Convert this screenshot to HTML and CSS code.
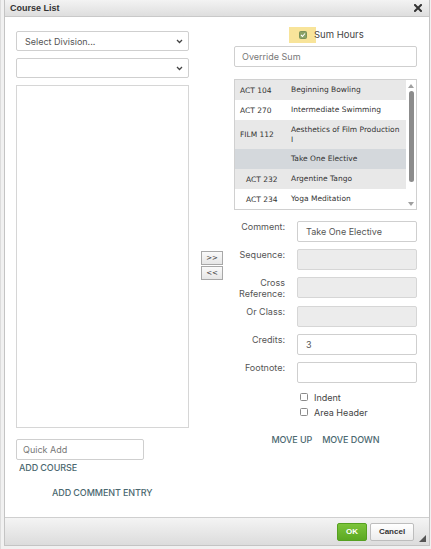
FILE: index.html
```html
<!DOCTYPE html>
<html>
<head>
<meta charset="utf-8">
<link rel="stylesheet" href="styles.css">
</head>
<body>
<div class="page">
  <div class="dialog">
    <div class="titlebar">
      <span class="title">Course List</span>
      <svg class="close" width="8" height="8" viewBox="0 0 8 8"><path d="M1 1 L7 7 M7 1 L1 7" stroke="#333" stroke-width="2" stroke-linecap="square"/></svg>
    </div>
    <div class="content">
      <div class="left">
        <div class="select"><span>Select Division...</span><svg width="7" height="5" viewBox="0 0 7 5"><path d="M1 1 L3.5 3.5 L6 1" fill="none" stroke="#444" stroke-width="1.3"/></svg></div>
        <div class="select"><span></span><svg width="7" height="5" viewBox="0 0 7 5"><path d="M1 1 L3.5 3.5 L6 1" fill="none" stroke="#444" stroke-width="1.3"/></svg></div>
        <div class="listbox"></div>
        <div class="quick">Quick Add</div>
        <div class="link add-course">ADD COURSE</div>
        <div class="link add-comment">ADD COMMENT ENTRY</div>
      </div>
      <div class="middle">
        <div class="mbtn">&gt;&gt;</div>
        <div class="mbtn">&lt;&lt;</div>
      </div>
      <div class="right">
        <div class="sumrow">
          <span class="hl"><span class="cbx checked"><svg width="6" height="6" viewBox="0 0 6 6"><path d="M1 3 L2.5 4.5 L5 1.5" fill="none" stroke="#fff" stroke-width="1.1"/></svg></span></span>
          <span class="sumtext">Sum Hours</span>
        </div>
        <div class="input override">Override Sum</div>
        <div class="courses">
          <div class="rows">
            <div class="row r-gray"><span class="code">ACT 104</span><span class="name">Beginning Bowling</span></div>
            <div class="row r-white"><span class="code">ACT 270</span><span class="name">Intermediate Swimming</span></div>
            <div class="row r-gray tall"><span class="code">FILM 112</span><span class="name">Aesthetics of Film Production I</span></div>
            <div class="row r-sel"><span class="code"></span><span class="name">Take One Elective</span></div>
            <div class="row r-gray"><span class="code ind">ACT 232</span><span class="name">Argentine Tango</span></div>
            <div class="row r-white"><span class="code ind">ACT 234</span><span class="name">Yoga Meditation</span></div>
          </div>
          <div class="scroll">
            <svg width="6" height="4" viewBox="0 0 6 4"><path d="M0 4 L3 0 L6 4 Z" fill="#a0a0a0"/></svg>
            <div class="thumb"></div>
            <svg width="6" height="4" viewBox="0 0 6 4"><path d="M0 0 L3 4 L6 0 Z" fill="#a0a0a0"/></svg>
          </div>
        </div>
        <div class="form">
          <div class="lbl">Comment:</div><div class="input field">Take One Elective</div>
          <div class="lbl">Sequence:</div><div class="input field dis"></div>
          <div class="lbl">Cross Reference:</div><div class="input field dis"></div>
          <div class="lbl">Or Class:</div><div class="input field dis"></div>
          <div class="lbl">Credits:</div><div class="input field">3</div>
          <div class="lbl">Footnote:</div><div class="input field"></div>
        </div>
        <div class="checks">
          <div class="chk"><span class="cbx"></span><span>Indent</span></div>
          <div class="chk"><span class="cbx"></span><span>Area Header</span></div>
        </div>
        <div class="moves">
          <span class="link">MOVE UP</span>
          <span class="link">MOVE DOWN</span>
        </div>
      </div>
    </div>
    <div class="footer">
      <div class="btn ok">OK</div>
      <div class="btn cancel">Cancel</div>
      <svg class="grip" width="7" height="7" viewBox="0 0 7 7"><path d="M7 0 L7 7 L0 7 Z" fill="#555"/></svg>
    </div>
  </div>
</div>
</body>
</html>
```
FILE: styles.css
```css
html, body {
  margin: 0;
  padding: 0;
}
body {
  width: 431px;
  height: 549px;
  overflow: hidden;
  background: #f1f1f1;
  font-family: "Inter", "Liberation Sans", sans-serif;
}
.page {
  height: 549px;
  padding-left: 3px;
  box-sizing: border-box;
  border-left: 1px solid #dcdcdc;
}
.dialog {
  width: 426px;
  height: 546px;
  box-sizing: border-box;
  border: 1px solid #c4c4c4;
  border-top: none;
  background: #fff;
  display: flex;
  flex-direction: column;
}
.titlebar {
  height: 17px;
  flex: none;
  box-sizing: border-box;
  border-bottom: 1px solid #c9c9c9;
  background: linear-gradient(#f3f3f3, #dedede);
  display: flex;
  align-items: center;
  justify-content: space-between;
  padding: 0 7px 0 5px;
}
.title {
  font-family: "Liberation Sans", sans-serif;
  font-weight: bold;
  font-size: 9px;
  color: #333;
}
.close {
  display: block;
}
.content {
  flex: 1;
  display: grid;
  grid-template-columns: 173px 45px 183px;
  padding: 10px 0 0 11px;
}
.left {
  padding-top: 4px;
  display: flex;
  flex-direction: column;
}
.select {
  height: 20px;
  box-sizing: border-box;
  border: 1px solid #cfcfcf;
  border-radius: 2px;
  display: flex;
  align-items: center;
  justify-content: space-between;
  padding: 0 5px 0 8px;
  font-size: 9px;
  color: #555;
  margin-bottom: 7px;
}
.listbox {
  height: 343px;
  box-sizing: border-box;
  border: 1px solid #d6d6d6;
}
.quick {
  width: 128px;
  height: 21px;
  box-sizing: border-box;
  border: 1px solid #cfcfcf;
  border-radius: 2px;
  margin-top: 11px;
  padding-left: 6px;
  display: flex;
  align-items: center;
  font-size: 9px;
  color: #777;
}
.link {
  font-size: 9px;
  font-weight: 500;
  color: #4b6870;
  letter-spacing: -0.1px;
}
.add-course {
  margin-top: 2px;
  padding-left: 3px;
}
.add-comment {
  margin-top: 14px;
  padding-left: 36px;
}
.middle {
  display: flex;
  flex-direction: column;
  align-items: center;
  justify-content: center;
  padding-bottom: 12px;
  padding-left: 1px;
}
.mbtn {
  width: 22px;
  height: 14px;
  box-sizing: border-box;
  border: 1px solid #a8a8a8;
  background: linear-gradient(#fafafa, #e6e6e6);
  font-family: "DejaVu Sans", sans-serif;
  font-size: 7px;
  color: #333;
  display: flex;
  align-items: center;
  justify-content: center;
  margin-bottom: 1px;
}
.right {
  display: flex;
  flex-direction: column;
}
.sumrow {
  height: 16px;
  display: flex;
  align-items: center;
  padding-left: 55px;
}
.hl {
  width: 27px;
  height: 16px;
  background: #f8e49a;
  display: flex;
  align-items: center;
  justify-content: center;
}
.cbx {
  width: 8px;
  height: 8px;
  box-sizing: border-box;
  border: 1px solid #8a8a8a;
  border-radius: 1.5px;
  background: #fff;
  display: inline-flex;
  align-items: center;
  justify-content: center;
  flex: none;
}
.cbx.checked {
  background: #8aa266;
  border-color: #7a925a;
}
.sumtext {
  font-size: 9.5px;
  color: #444;
  margin-left: -2px;
  margin-top: -2px;
}
.input {
  height: 21px;
  box-sizing: border-box;
  border: 1px solid #cfcfcf;
  border-radius: 2px;
  display: flex;
  align-items: center;
  padding-left: 8px;
  font-size: 9px;
  color: #555;
}
.override {
  margin-top: 3px;
  color: #777;
  padding-left: 7px;
}
.courses {
  margin-top: 12px;
  height: 131px;
  box-sizing: border-box;
  border: 1px solid #d0d0d0;
  display: flex;
}
.rows {
  flex: 1;
  display: flex;
  flex-direction: column;
}
.row {
  height: 20px;
  display: flex;
  align-items: center;
  font-family: "DejaVu Sans", sans-serif;
  font-size: 7.5px;
  color: #333;
}
.row.tall {
  height: 29px;
}
.r-gray { background: #e8e8e8; }
.r-white { background: #fff; }
.r-sel { background: #d4d8dc; }
.code {
  width: 51px;
  flex: none;
  padding-left: 5px;
  box-sizing: content-box;
}
.code.ind {
  padding-left: 11px;
  width: 45px;
}
.name {
  flex: 1;
  padding-right: 4px;
  line-height: 10px;
}
.scroll {
  width: 10px;
  flex: none;
  display: flex;
  flex-direction: column;
  align-items: center;
  padding: 4px 0 3px;
  box-sizing: border-box;
  justify-content: space-between;
}
.thumb {
  width: 5px;
  flex: 1;
  margin: 3px 0 20px;
  background: #8c8c8c;
  border-radius: 3px;
}
.form {
  margin-top: 11px;
  display: grid;
  grid-template-columns: 51px 120px;
  column-gap: 12px;
  row-gap: 7px;
}
.lbl {
  text-align: right;
  font-size: 9px;
  line-height: 11px;
  color: #555;
}
.field.dis {
  background: #ececec;
  border-color: #d6d6d6;
}
.checks {
  margin-top: 8px;
  padding-left: 66px;
  display: flex;
  flex-direction: column;
  gap: 3px;
}
.chk {
  height: 12px;
  display: flex;
  align-items: center;
  gap: 6px;
  font-size: 9px;
  color: #444;
}
.moves {
  margin-top: 16px;
  display: flex;
  justify-content: center;
  gap: 10px;
}
.footer {
  height: 28px;
  flex: none;
  box-sizing: border-box;
  border-top: 1px solid #cfcfcf;
  background: linear-gradient(#f4f4f4, #dcdcdc);
  display: flex;
  align-items: center;
  justify-content: flex-end;
  padding-right: 15px;
  gap: 3px;
  position: relative;
}
.btn {
  height: 18px;
  box-sizing: border-box;
  border-radius: 2px;
  display: flex;
  align-items: center;
  justify-content: center;
  font-family: "Liberation Sans", sans-serif;
  font-weight: bold;
  font-size: 8px;
}
.ok {
  width: 30px;
  background: linear-gradient(#7cc43a, #5ba822);
  border: 1px solid #55a020;
  color: #fff;
}
.cancel {
  width: 44px;
  background: linear-gradient(#ffffff, #ececec);
  border: 1px solid #bdbdbd;
  color: #333;
}
.grip {
  position: absolute;
  right: 3px;
  bottom: 3px;
}
```
